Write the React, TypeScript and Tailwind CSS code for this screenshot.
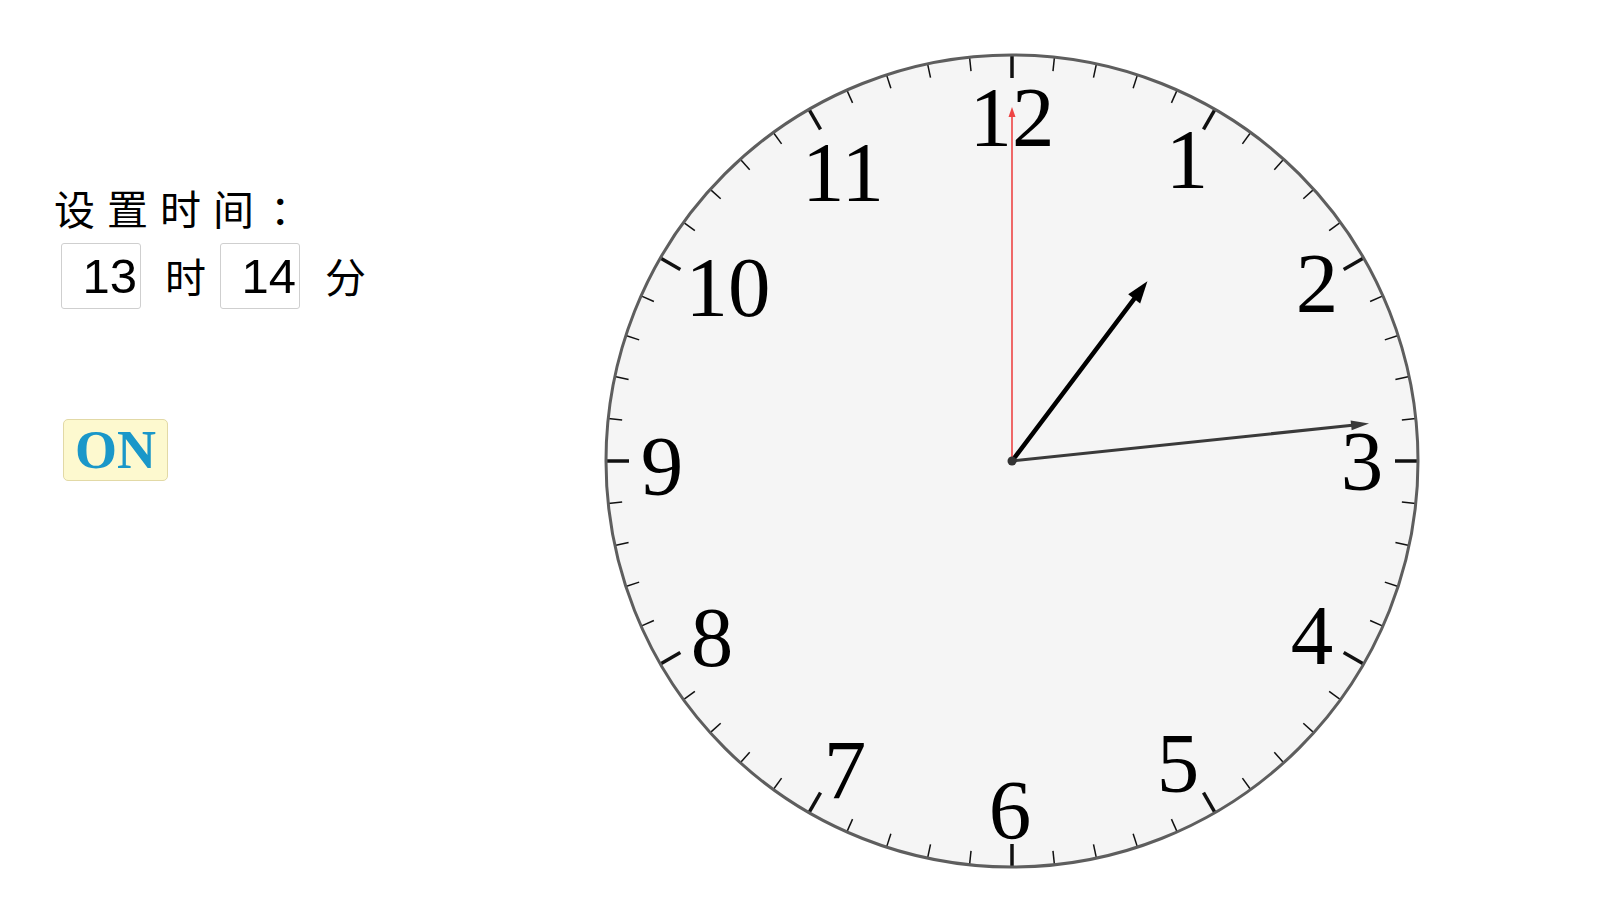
import React from "react";

const CX = 410;
const CY = 410;
const R = 406;

const HOUR = 13;
const MINUTE = 14;

// small per-label nudges so the numerals sit where the original face puts them
const NUDGE: Record<number, [number, number]> = {
  1: [0, 2],
  2: [2, -2],
  3: [0, 1],
  4: [-3, 0],
  5: [-9, 0],
  6: [-2, 0],
  7: [8, 7],
  8: [3, 2],
  9: [0, 6],
  10: [7, -5],
  11: [-1, 3],
  12: [0, -7],
};

function Hand({ angle, length, width, color, head, half }: { angle: number; length: number; width: number; color: string; head: number; half: number }) {
  const tipY = CY - length;
  return (
    <g transform={`rotate(${angle} ${CX} ${CY})`}>
      <line x1={CX} y1={CY} x2={CX} y2={tipY + head * 0.8} stroke={color} strokeWidth={width} strokeLinecap="round" />
      <polygon points={`${CX},${tipY} ${CX - half},${tipY + head} ${CX + half},${tipY + head}`} fill={color} />
    </g>
  );
}

function Clock() {
  const ticks = Array.from({ length: 60 }, (_, i) => i);
  const nums = Array.from({ length: 12 }, (_, i) => i + 1);
  const hourAngle = ((HOUR % 12) + MINUTE / 60) * 30;
  const minuteAngle = MINUTE * 6;

  return (
    <svg width={820} height={820} viewBox="0 0 820 820" className="shrink-0">
      <circle cx={CX} cy={CY} r={R} fill="#f5f5f5" />
      {ticks.map((i) => {
        const major = i % 5 === 0;
        const len = major ? 23 : 14;
        const a = (i * 6 * Math.PI) / 180;
        const s = Math.sin(a);
        const c = Math.cos(a);
        return (
          <line
            key={i}
            x1={CX + s * (R - len)}
            y1={CY - c * (R - len)}
            x2={CX + s * R}
            y2={CY - c * R}
            stroke="#111"
            strokeWidth={major ? 3.5 : 1.5}
          />
        );
      })}
      <circle cx={CX} cy={CY} r={R} fill="none" stroke="#5e5e5e" strokeWidth={3} />
      {nums.map((n) => {
        const a = (n * 30 * Math.PI) / 180;
        const r = n >= 10 ? 336 : 350;
        const [dx, dy] = NUDGE[n];
        return (
          <text
            key={n}
            x={CX + Math.sin(a) * r + dx}
            y={CY - Math.cos(a) * r + 28 + dy}
            textAnchor="middle"
            fontSize={85}
            fill="#000"
            style={{ fontFamily: '"Liberation Serif", "Times New Roman", serif' }}
          >
            {n}
          </text>
        );
      })}
      <Hand angle={hourAngle} length={225} width={4.5} color="#000" head={22} half={7.5} />
      <Hand angle={minuteAngle} length={359} width={3} color="#3a3a3a" head={18} half={5} />
      <Hand angle={0} length={354} width={1.6} color="#ee4444" head={10} half={3.5} />
      <circle cx={CX} cy={CY} r={4.5} fill="#333" />
    </svg>
  );
}

function TimeBox({ value }: { value: string }) {
  return (
    <div className="flex h-[66px] w-[80px] items-center justify-end rounded-[3px] border border-[#cfcfcf] bg-white pr-[3px] font-['Liberation_Sans',Arial,sans-serif] text-[49px] leading-none text-black">
      {value}
    </div>
  );
}

export default function App() {
  return (
    <div className="flex h-[916px] w-[1600px] overflow-hidden bg-white">
      {/* Controls */}
      <div className="flex w-[602px] shrink-0 flex-col pt-[181px] font-['Noto_Sans_CJK_SC',sans-serif] text-black">
        <div className="flex pl-[54px] text-[41px] leading-[52px]">
          <span className="tracking-[12px]">设置时间</span>
          <span className="ml-[4px]">：</span>
        </div>
        <div className="mt-[10px] flex h-[66px] items-center pl-[61px] text-[41px]">
          <TimeBox value="13" />
          <span className="ml-[24px] mr-[14px]">时</span>
          <TimeBox value="14" />
          <span className="ml-[25px]">分</span>
        </div>
        <div className="mt-[110px] pl-[63px]">
          <button className="flex h-[62px] w-[105px] items-center justify-center rounded-[5px] border border-[#e2d9a6] bg-[#fdf9cf] font-['Liberation_Serif',serif] text-[54px] font-bold leading-none text-[#1a97c9]">
            ON
          </button>
        </div>
      </div>

      {/* Clock face */}
      <div className="pt-[51px]">
        <Clock />
      </div>
    </div>
  );
}
